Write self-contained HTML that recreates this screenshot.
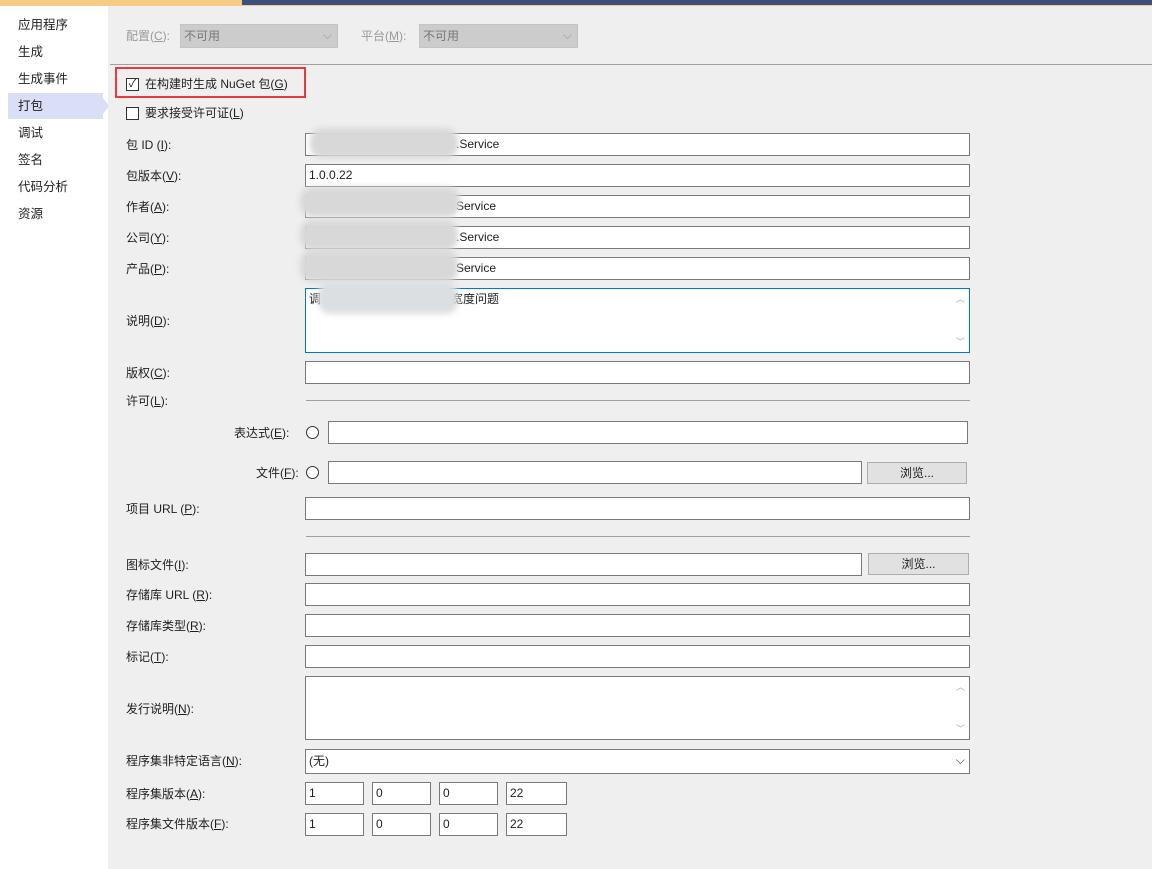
<!DOCTYPE html>
<html><head><meta charset="utf-8"><style>
*{box-sizing:border-box;margin:0;padding:0}
body{width:1152px;height:869px;background:#efefef;position:relative;overflow:hidden;font-family:"Liberation Sans","Noto Sans CJK SC",sans-serif;font-size:12px;color:#1e1e1e}
.a{position:absolute}
.l{position:absolute;left:126px;line-height:14px;white-space:nowrap}
.i{position:absolute;background:#fff;border:1px solid #7a7a7a;height:23px;padding:3px 3px;line-height:15px;white-space:nowrap}
.b{position:absolute;background:#e1e1e1;border:1px solid #adadad;height:22px;text-align:center;line-height:20px}
.s{position:absolute;left:18px;font-size:12.5px;line-height:16px}
.r{position:absolute;width:13px;height:13px;border:1px solid #333;border-radius:50%;background:#fff}
.hr{position:absolute;height:1px;background:#a0a0a0}
.bl{position:absolute;background:#d8d8d8;filter:blur(3px);border-radius:12px}
.sc{position:absolute;right:4px;color:#aaa;font-size:9px}
</style></head><body>
<div class="a" style="left:0;top:0;width:242px;height:6px;background:#f5cc84"></div>
<div class="a" style="left:242;left:242px;top:0;width:910px;height:5px;background:#3c4f80"></div>
<div class="a" style="left:242px;top:5px;width:910px;height:1px;background:#f5cc84"></div>
<div class="a" style="left:0;top:6px;width:108px;height:863px;background:#fff"></div>
<div class="a" style="left:8px;top:93px;width:95px;height:26px;background:#dadff7"></div>
<div class="a" style="left:103px;top:98px;width:0;height:0;border-top:8px solid transparent;border-bottom:8px solid transparent;border-left:6px solid #dadff7"></div>
<div class="s" style="top:17px">应用程序</div>
<div class="s" style="top:44px">生成</div>
<div class="s" style="top:71px">生成事件</div>
<div class="s" style="top:98px">打包</div>
<div class="s" style="top:125px">调试</div>
<div class="s" style="top:152px">签名</div>
<div class="s" style="top:179px">代码分析</div>
<div class="s" style="top:206px">资源</div>

<div class="l" style="top:29px;color:#9a9a9a">配置(<u>C</u>):</div>
<div class="a" style="left:180px;top:24px;width:158px;height:24px;background:#ccc;border:1px solid #c4c4c4;color:#777;padding:4px 3px;line-height:14px">不可用<span style="position:absolute;right:5px;top:3px;color:#999">⌵</span></div>
<div class="a" style="left:361px;top:29px;color:#9a9a9a;line-height:14px">平台(<u>M</u>):</div>
<div class="a" style="left:419px;top:24px;width:159px;height:24px;background:#ccc;border:1px solid #c4c4c4;color:#777;padding:4px 3px;line-height:14px">不可用<span style="position:absolute;right:5px;top:3px;color:#999">⌵</span></div>
<div class="hr" style="left:110px;top:64px;width:1042px"></div>

<div class="a" style="left:115px;top:67px;width:191px;height:31px;border:2px solid #e8393d"></div>
<div class="a" style="left:126px;top:78px;width:13px;height:13px;border:1px solid #333;background:#fff;font-size:11px;line-height:11px;text-align:center">✓</div>
<div class="a" style="left:145px;top:77px;line-height:14px">在构建时生成 NuGet 包(<u>G</u>)</div>
<div class="a" style="left:126px;top:107px;width:13px;height:13px;border:1px solid #333;background:#fff"></div>
<div class="a" style="left:145px;top:106px;line-height:14px">要求接受许可证(<u>L</u>)</div>

<div class="l" style="top:138px">包 ID (<u>I</u>):</div><div class="i" style="left:305px;top:133px;width:665px;padding-left:150px">.Service</div>
<div class="l" style="top:169px">包版本(<u>V</u>):</div><div class="i" style="left:305px;top:164px;width:665px">1.0.0.22</div>
<div class="l" style="top:200px">作者(<u>A</u>):</div><div class="i" style="left:305px;top:195px;width:665px;padding-left:150px">Service</div>
<div class="l" style="top:231px">公司(<u>Y</u>):</div><div class="i" style="left:305px;top:226px;width:665px;padding-left:150px">.Service</div>
<div class="l" style="top:262px">产品(<u>P</u>):</div><div class="i" style="left:305px;top:257px;width:665px;padding-left:150px">Service</div>
<div class="l" style="top:314px">说明(<u>D</u>):</div>
<div class="i" style="left:305px;top:288px;width:665px;height:65px;border-color:#0078d7">调<span style="padding-left:130px">宽度问题</span><span class="sc" style="top:3px">︿</span><span class="sc" style="bottom:2px">﹀</span></div>
<div class="bl" style="left:310px;top:128px;width:148px;height:30px"></div>
<div class="bl" style="left:300px;top:187px;width:160px;height:30px"></div>
<div class="bl" style="left:300px;top:220px;width:158px;height:30px"></div>
<div class="bl" style="left:300px;top:250px;width:158px;height:32px"></div>
<div class="bl" style="left:318px;top:282px;width:140px;height:32px;background:#dcdfe2"></div>

<div class="l" style="top:366px">版权(<u>C</u>):</div><div class="i" style="left:305px;top:361px;width:665px"></div>
<div class="l" style="top:394px">许可(<u>L</u>):</div><div class="hr" style="left:306px;top:400px;width:664px"></div>
<div class="a" style="left:234px;top:426px;line-height:14px">表达式(<u>E</u>):</div>
<div class="r" style="left:306px;top:426px"></div><div class="i" style="left:328px;top:421px;width:640px"></div>
<div class="a" style="left:256px;top:466px;line-height:14px">文件(<u>F</u>):</div>
<div class="r" style="left:306px;top:466px"></div><div class="i" style="left:328px;top:461px;width:534px"></div>
<div class="b" style="left:867px;top:462px;width:100px">浏览...</div>
<div class="l" style="top:502px">项目 URL (<u>P</u>):</div><div class="i" style="left:305px;top:497px;width:665px"></div>
<div class="hr" style="left:306px;top:536px;width:664px"></div>
<div class="l" style="top:558px">图标文件(<u>I</u>):</div><div class="i" style="left:305px;top:553px;width:557px"></div>
<div class="b" style="left:868px;top:553px;width:101px">浏览...</div>
<div class="l" style="top:588px">存储库 URL (<u>R</u>):</div><div class="i" style="left:305px;top:583px;width:665px"></div>
<div class="l" style="top:619px">存储库类型(<u>R</u>):</div><div class="i" style="left:305px;top:614px;width:665px"></div>
<div class="l" style="top:650px">标记(<u>T</u>):</div><div class="i" style="left:305px;top:645px;width:665px"></div>
<div class="l" style="top:702px">发行说明(<u>N</u>):</div><div class="i" style="left:305px;top:676px;width:665px;height:64px"><span class="sc" style="top:3px">︿</span><span class="sc" style="bottom:2px">﹀</span></div>
<div class="l" style="top:754px">程序集非特定语言(<u>N</u>):</div><div class="i" style="left:305px;top:749px;width:665px;height:25px;padding-top:4px">(无)<span style="position:absolute;right:4px;top:3px;color:#333">⌵</span></div>
<div class="l" style="top:787px">程序集版本(<u>A</u>):</div>
<div class="i" style="left:305px;top:782px;width:59px">1</div><div class="i" style="left:372px;top:782px;width:59px">0</div><div class="i" style="left:439px;top:782px;width:59px">0</div><div class="i" style="left:506px;top:782px;width:61px">22</div>
<div class="l" style="top:817px">程序集文件版本(<u>F</u>):</div>
<div class="i" style="left:305px;top:813px;width:59px">1</div><div class="i" style="left:372px;top:813px;width:59px">0</div><div class="i" style="left:439px;top:813px;width:59px">0</div><div class="i" style="left:506px;top:813px;width:61px">22</div>
</body></html>
